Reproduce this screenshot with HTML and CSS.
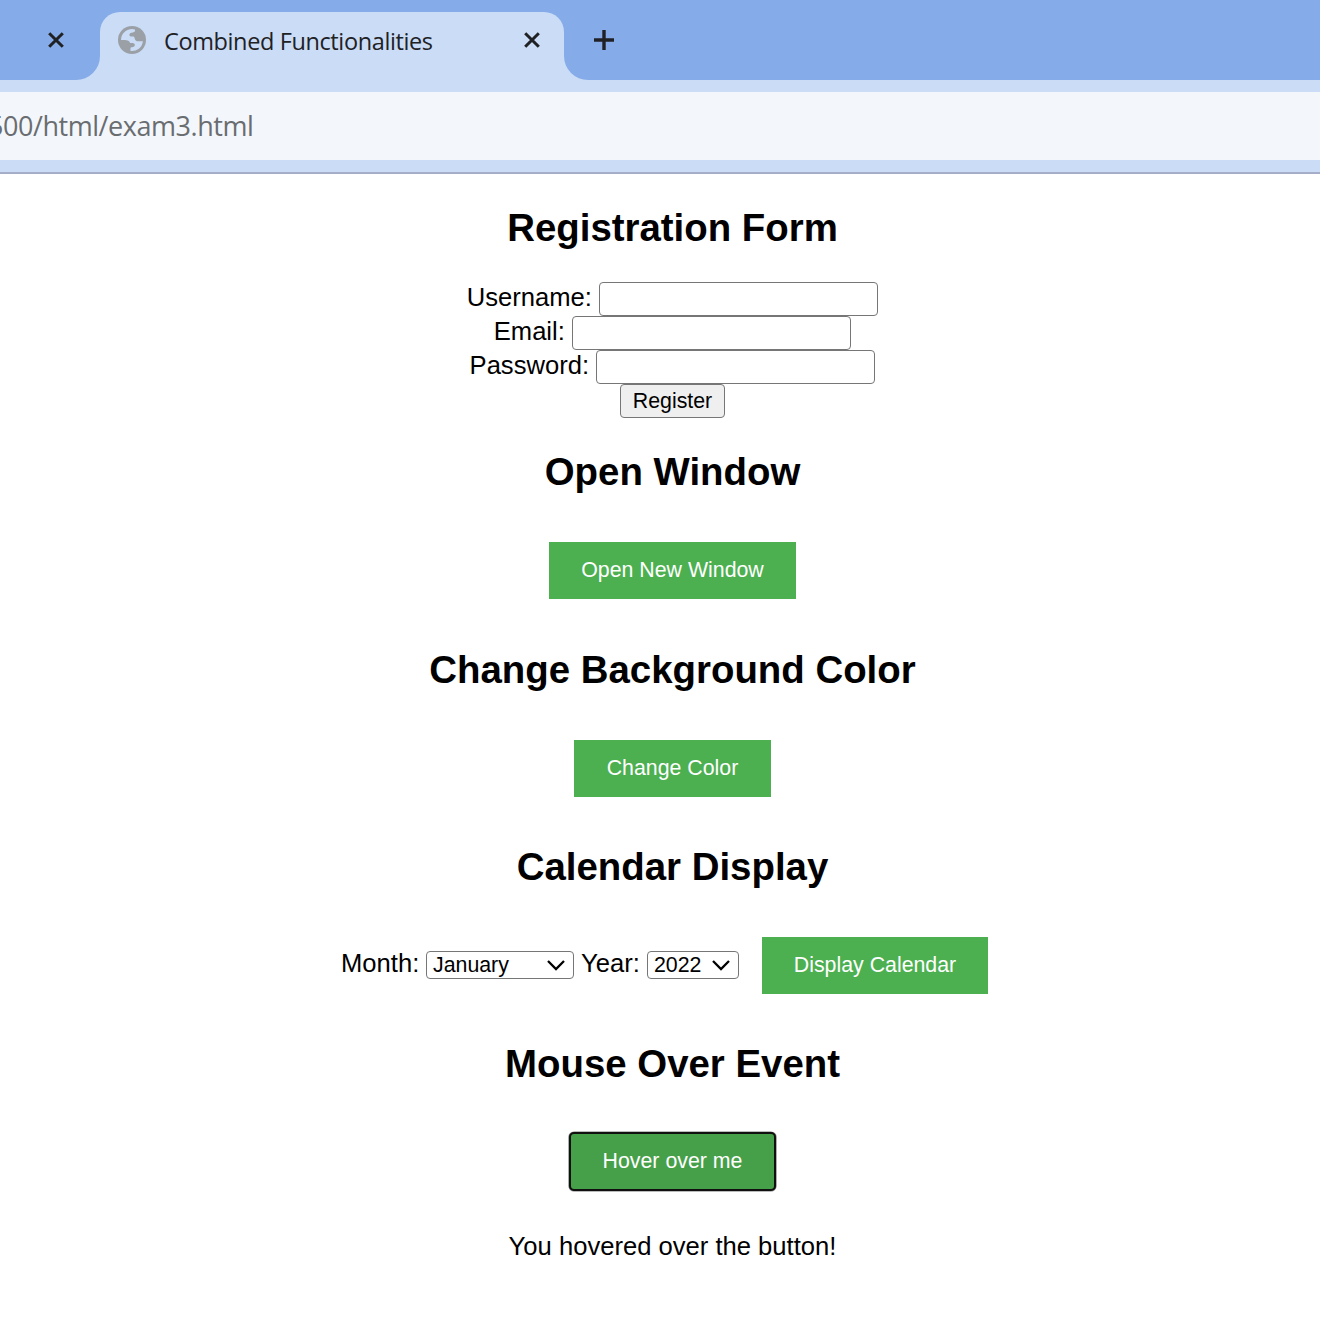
FILE: index.html
```html
<!DOCTYPE html>
<html lang="en">
<head>
<meta charset="utf-8">
<title>Combined Functionalities</title>
<link rel="stylesheet" href="styles.css">
</head>
<body>
<header class="browser">
  <div class="tabs">
    <div class="tab-prev"><svg class="close" viewBox="0 0 16 16"><path d="M1.2 1.2 14.8 14.8M14.8 1.2 1.2 14.8"/></svg></div>
    <div class="tab">
      <svg class="globe" viewBox="0 0 28 28"><circle cx="14" cy="14" r="14"/><path d="M3 14A11 11 0 0 1 17 3.400V4.500C17 6.800 14.500 6.300 12.500 7C10.800 8 11.200 10.600 13.500 10.600H15.500C17 11 16.500 15 19 15.200H24.900A11 11 0 0 1 12.500 25V21.800C13.500 20.800 16.800 21.500 16.800 19C16.800 17 14.500 17.200 12 17C11.800 14.500 9 14 3 14Z"/></svg>
      <span class="tab-title">Combined Functionalities</span>
      <svg class="close" viewBox="0 0 16 16"><path d="M1.2 1.2 14.8 14.8M14.8 1.2 1.2 14.8"/></svg>
    </div>
    <div class="tabs-rest"><svg class="plus" viewBox="0 0 20 20"><path d="M10 0V20M0 10H20"/></svg></div>
  </div>
  <div class="address"><span class="url">500/html/exam3.html</span></div>
</header>
<main class="page">
  <h2>Registration Form</h2>
  <form class="form">
    <div class="field"><label for="user">Username:</label><input id="user" type="text"></div>
    <div class="field"><label for="email">Email:</label><input id="email" type="email"></div>
    <div class="field"><label for="pass">Password:</label><input id="pass" type="password"></div>
    <button class="register" type="button">Register</button>
  </form>
  <h2>Open Window</h2>
  <button class="action open" type="button">Open New Window</button>
  <h2>Change Background Color</h2>
  <button class="action change" type="button">Change Color</button>
  <h2>Calendar Display</h2>
  <div class="calendar">
    <span class="month-label">Month:</span>
    <div class="select month"><span>January</span><svg viewBox="0 0 18 10"><path d="M1 1 9 9 17 1"/></svg></div>
    <span class="year-label">Year:</span>
    <div class="select year"><span>2022</span><svg viewBox="0 0 18 10"><path d="M1 1 9 9 17 1"/></svg></div>
    <button class="action display" type="button">Display Calendar</button>
  </div>
  <h2>Mouse Over Event</h2>
  <button class="action hover" type="button">Hover over me</button>
  <p class="message">You hovered over the button!</p>
</main>
</body>
</html>
```
FILE: styles.css
```css
* { box-sizing: border-box; }
body { margin: 0; background: #fff; color: #000; font: 25.6px/34px "Liberation Sans", Arial, sans-serif; height: 1342px; overflow: hidden; }
svg { display: block; flex: none; overflow: visible; }
path { fill: none; stroke: #202124; }

.browser { height: 174px; background: #cbdcf6; border-bottom: 2px solid #a6adc8; }
.tabs { height: 80px; display: flex; }
.tab-prev { flex: none; width: 100px; padding: 32px 0 0 48px; background: #85ace9; border-bottom-right-radius: 24px; }
.tab { flex: none; width: 464px; height: 80px; padding: 12px 24px 12px 18px; background: #cbdcf6; display: flex; align-items: center; position: relative; }
.tab::before { content: ""; position: absolute; inset: 0 0 auto; height: 34px; background: #85ace9; }
.tab::after { content: ""; position: absolute; inset: 12px 0 auto; height: 34px; background: #cbdcf6; border-radius: 20px 20px 0 0; }
.tab > * { position: relative; z-index: 1; }
.tabs-rest { flex: 1; padding: 30px; background: #85ace9; border-bottom-left-radius: 24px; }
.globe { width: 28px; height: 28px; }
.globe circle { fill: #9aa0a6; }
.globe path { fill: #cbdcf6; stroke: none; }
.tab-title { margin-left: 18px; color: #202124; font: 23.5px/32px "Open Sans", "Noto Sans", sans-serif; letter-spacing: -.38px; padding-top: 1px; white-space: nowrap; }
.close { width: 16px; height: 16px; }
.tab .close { margin-left: auto; }
.close path { stroke-width: 3; }
.plus { width: 20px; height: 20px; }
.plus path { stroke-width: 3.4; }
.address { height: 68px; margin-top: 12px; background: #f3f7fc; display: flex; align-items: center; overflow: hidden; }
.url { margin-left: -12px; color: #6a6d70; font: 27px/36px "Open Sans", "Noto Sans", sans-serif; letter-spacing: -.45px; white-space: nowrap; }

.page { padding: 32px 0 0 25px; display: flex; flex-direction: column; align-items: center; }
h2 { margin: 0; font-size: 38.4px; line-height: 44px; white-space: nowrap; }
.form { margin: 32px 0; display: flex; flex-direction: column; align-items: center; }
.field { height: 34px; display: flex; gap: 7px; line-height: 31px; }
input { width: 279.4px; height: 34px; margin: 0; border: 1px solid #767676; border-radius: 4px; background: #fff; }
button { font-family: "Liberation Sans", Arial, sans-serif; font-size: 21.33px; white-space: nowrap; padding: 0; }
.register { width: 105px; height: 34px; border: 1px solid #767676; border-radius: 4px; background: #efefef; color: #000; }
.action { height: 57px; border: 0; background: #4caf50; color: #fff; }
.open { width: 247px; margin: 48px 0 49px; }
.change { width: 197px; margin: 48px 0; }
.calendar { width: 647px; height: 57px; margin: 48px 16px 48px 0; display: flex; align-items: center; }
.month-label { width: 85px; padding-bottom: 5px; }
.year-label { width: 66px; margin-left: 7px; padding-bottom: 5px; }
.select { height: 28px; margin-bottom: 1px; border: 1px solid #767676; border-radius: 4px; display: flex; align-items: center; justify-content: space-between; padding: 0 8px 0 6px; font-size: 21.33px; line-height: 26px; }
.select svg { width: 18px; height: 10px; }
.select path { stroke-width: 2.3; stroke: #000; }
.month { width: 148px; }
.year { width: 92px; }
.display { width: 226px; margin-left: 23px; }
.hover { width: 207px; height: 59px; margin: 46px 0 38px; background: #46a049; border: 2px solid #101010; border-radius: 5px; box-shadow: 0 0 0 .6px #777; }
.message { margin: 0; white-space: nowrap; }
```
